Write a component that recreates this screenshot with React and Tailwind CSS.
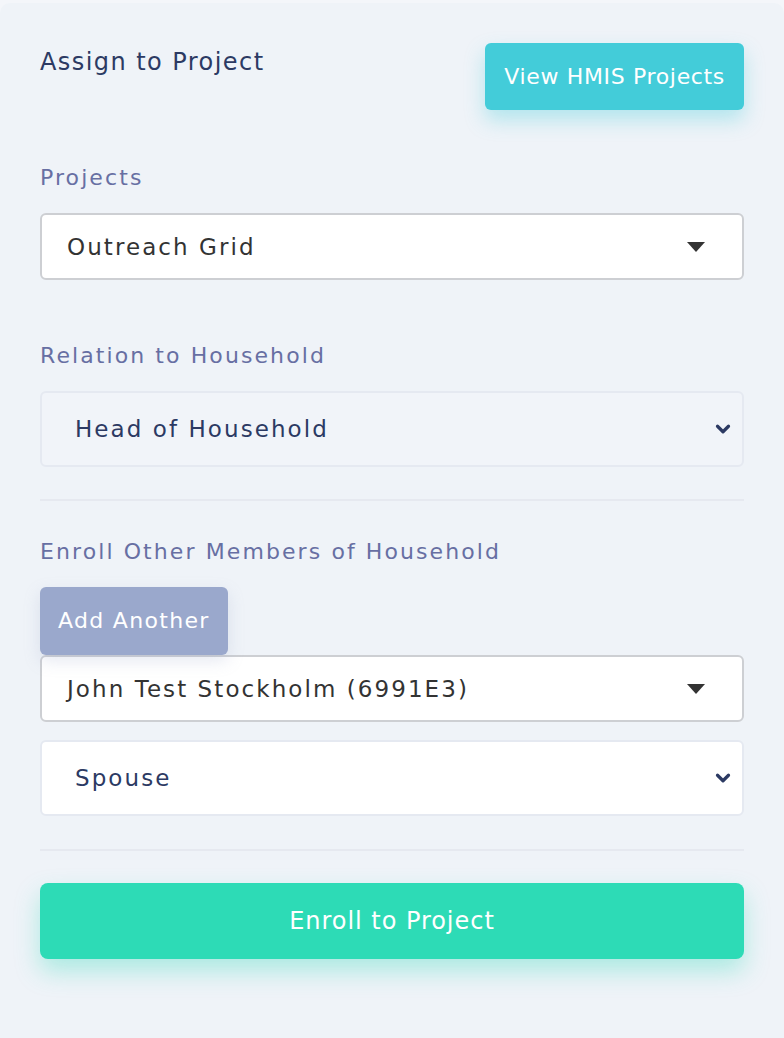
import { ChevronDown } from 'lucide-react'

const font = { fontFamily: '"DejaVu Sans", Inter, sans-serif' }

function Caret() {
  return (
    <svg width="20" height="12" viewBox="0 0 20 12" className="shrink-0">
      <path d="M1 1h18L10 11z" fill="#333" />
    </svg>
  )
}

function PickSelect({ value }) {
  return (
    <div className="flex h-[67px] items-center justify-between rounded-[6px] border-2 border-[#cdcfd3] bg-white pl-[25px] pr-[36px]">
      <span className="text-[23px] leading-[30px] tracking-[0.09em] text-[#333333]">{value}</span>
      <Caret />
    </div>
  )
}

function NativeSelect({ value, white }) {
  return (
    <div className={`flex h-[76px] items-center justify-between rounded-[6px] border-2 border-[#e5e9f1] pl-[33px] pr-[8px] ${white ? 'bg-white' : 'bg-[#f1f4f9]'}`}>
      <span className="text-[23px] leading-[30px] tracking-[0.09em] text-[#2c3a63]">{value}</span>
      <ChevronDown size={22} strokeWidth={3.5} color="#2c3a63" />
    </div>
  )
}

function Label({ children, className = '' }) {
  return <p className={`text-[22px] leading-[30px] tracking-[0.095em] text-[#676fa3] ${className}`}>{children}</p>
}

export default function App() {
  return (
    <div className="min-h-[1038px] bg-[#f4f6fa] pt-[3px]" style={font}>
      <div className="min-h-[1035px] rounded-tl-[10px] rounded-tr-[10px] bg-[#eff3f8] px-[40px] pt-[40px] pb-[40px]">
        <div className="flex items-start justify-between">
          <h2 className="mt-[4px] text-[24px] leading-[30px] tracking-[0.06em] text-[#2c3a63]">Assign to Project</h2>
          <button className="h-[67px] rounded-[6px] bg-[#43ccd9] px-[19px] text-[22px] leading-[30px] tracking-[0.03em] text-white shadow-[0_10px_20px_rgba(67,204,217,0.35)]">
            View HMIS Projects
          </button>
        </div>

        <Label className="mt-[53px]">Projects</Label>
        <div className="mt-[20px]">
          <PickSelect value="Outreach Grid" />
        </div>

        <Label className="mt-[61px]">Relation to Household</Label>
        <div className="mt-[20px]">
          <NativeSelect value="Head of Household" />
        </div>

        <div className="mt-[32px] h-[2px] bg-[#e6e9f0]" />

        <Label className="mt-[36px]">Enroll Other Members of Household</Label>
        <button className="mt-[20px] h-[68px] rounded-[6px] bg-[#9aa8cc] px-[18px] text-[22px] leading-[30px] tracking-[0.06em] text-white shadow-[0_6px_16px_rgba(154,168,204,0.25)]">
          Add Another
        </button>
        <PickSelect value="John Test Stockholm (6991E3)" />
        <div className="mt-[18px]">
          <NativeSelect value="Spouse" white />
        </div>

        <div className="mt-[33px] h-[2px] bg-[#e6e9f0]" />

        <button className="mt-[32px] h-[76px] w-full rounded-[8px] bg-[#2ddbb6] text-[24px] leading-[30px] tracking-[0.04em] text-white shadow-[0_12px_24px_rgba(45,219,182,0.35)]">
          Enroll to Project
        </button>
      </div>
    </div>
  )
}
